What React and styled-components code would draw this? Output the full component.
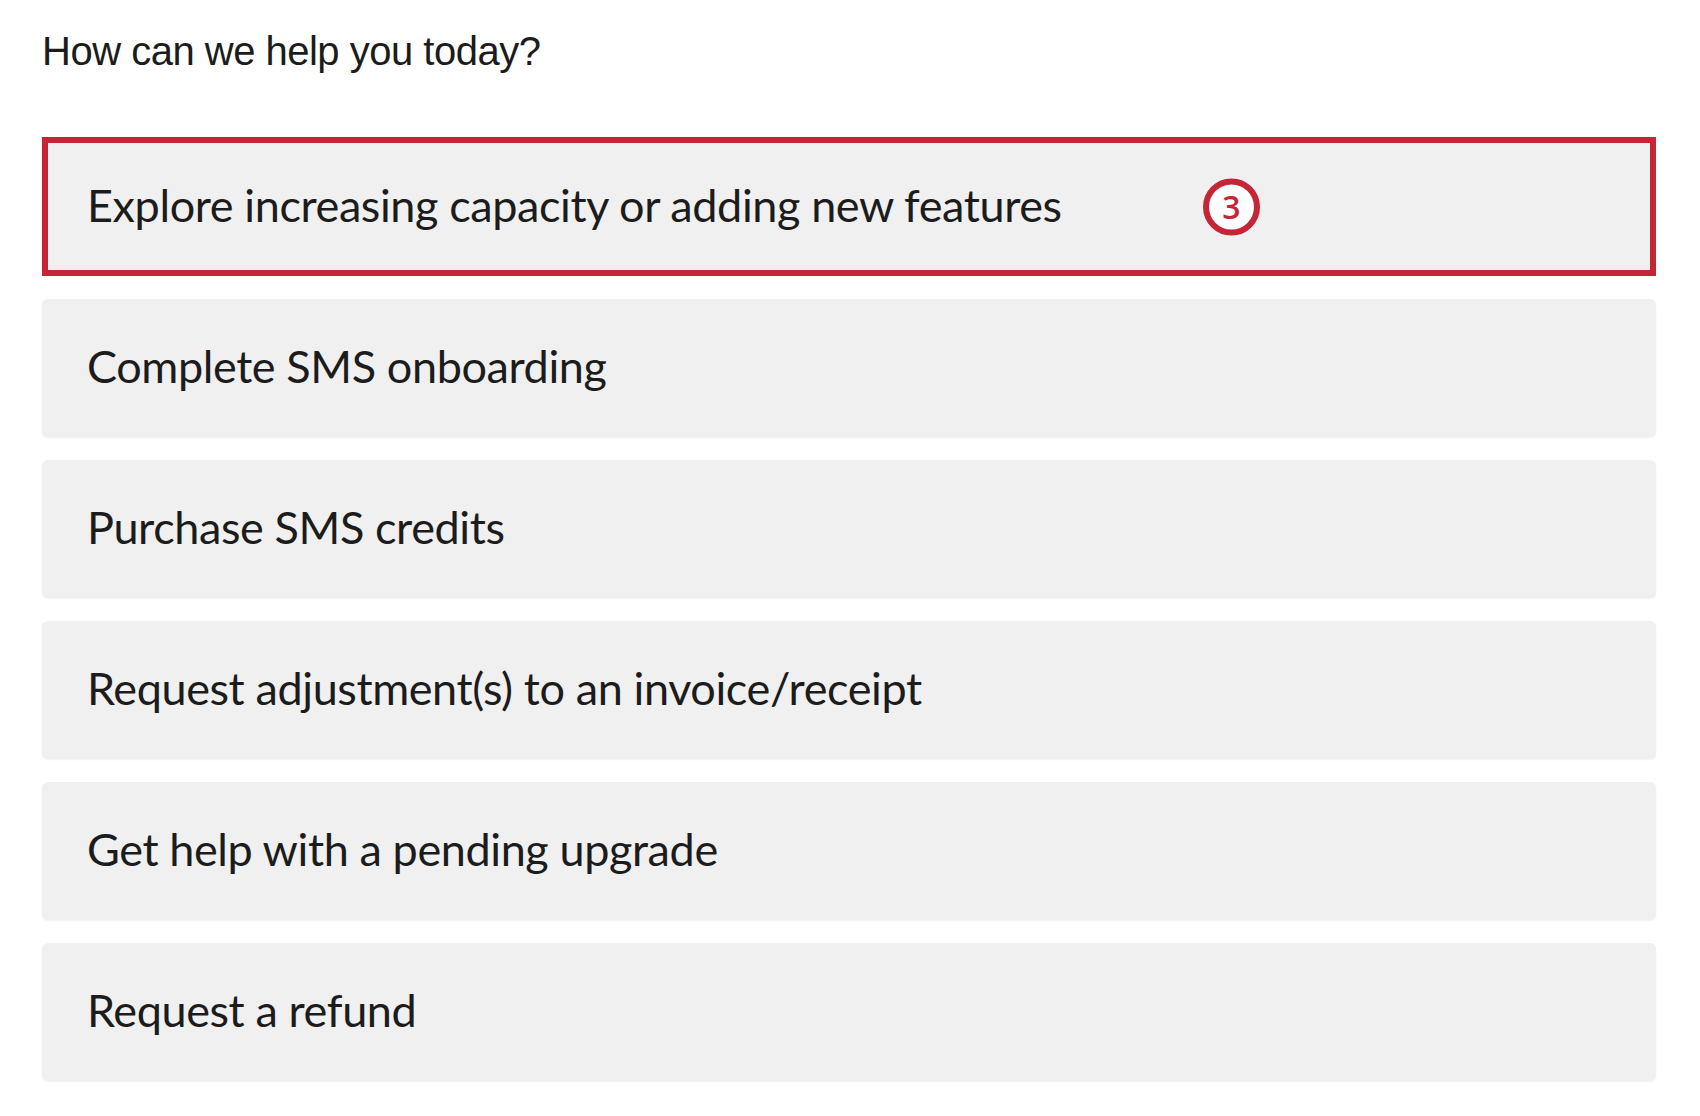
import styled, { createGlobalStyle } from "styled-components";

const GlobalStyle = createGlobalStyle`
body {
  margin: 0;
  background-color: #ffffff;
}
`

const options = [
  "Explore increasing capacity or adding new features",
  "Complete SMS onboarding",
  "Purchase SMS credits",
  "Request adjustment(s) to an invoice/receipt",
  "Get help with a pending upgrade",
  "Request a refund",
]

export default function App() {
  return (
    <>
      <GlobalStyle />
      <Page>
        <Title>How can we help you today?</Title>
        <List>
          {options.map((text, i) => (
            <Option key={text} highlighted={i === 0 ? 1 : 0}>
              <Label>{text}</Label>
              {i === 0 && <Badge>3</Badge>}
            </Option>
          ))}
        </List>
      </Page>
    </>
  )
}

const Page = styled.div`
width: 1700px;
height: 1116px;
box-sizing: border-box;
padding: 31px 44px 0 42px;
`

const Title = styled.h1`
margin: 0;
font-family: "Liberation Sans", Arial, sans-serif;
font-weight: 400;
font-size: 40px;
line-height: 40px;
letter-spacing: -0.5px;
color: #1c1c1c;
`

const List = styled.div`
margin-top: 66px;
display: flex;
flex-direction: column;
gap: 23px;
`

const Option = styled.div`
position: relative;
height: ${p => (p.highlighted ? "139px" : "138px")};
box-sizing: border-box;
display: flex;
align-items: center;
padding-left: ${p => (p.highlighted ? "39px" : "45px")};
padding-bottom: 4px;
background-color: #f0f0f0;
border: ${p => (p.highlighted ? "6px solid #c52536" : "none")};
border-radius: ${p => (p.highlighted ? "0" : "6px")};
box-shadow: ${p => (p.highlighted ? "none" : "0 1px 2px rgba(0, 0, 0, 0.06)")};
`

const Label = styled.span`
font-family: Lato, "Liberation Sans", sans-serif;
font-size: 45px;
font-weight: 400;
letter-spacing: -0.4px;
color: #1c1c1c;
`

const Badge = styled.div`
position: absolute;
left: 1155px;
top: 50%;
transform: translateY(-50%);
width: 57px;
height: 57px;
box-sizing: border-box;
border: 6px solid #c52536;
border-radius: 50%;
background-color: #ffffff;
display: flex;
align-items: center;
justify-content: center;
font-family: "Open Sans", "Liberation Sans", sans-serif;
font-size: 32px;
font-weight: 600;
line-height: 1;
color: #c52536;
`
